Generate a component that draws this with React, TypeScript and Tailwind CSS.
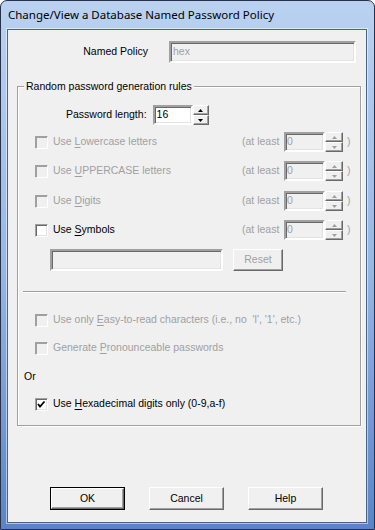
import React from "react";

// classic win32 dialog bits
const sunken =
  "border-2 border-t-[#a0a0a0] border-l-[#a0a0a0] border-b-white border-r-white shadow-[inset_1px_1px_0_#696969,inset_-1px_-1px_0_#e3e3e3]";
const raised =
  "border border-t-white border-l-white border-b-[#696969] border-r-[#696969] shadow-[inset_-1px_-1px_0_#a0a0a0]";

function Label({
  pre,
  hot,
  post,
}: {
  pre: string;
  hot: string;
  post: string;
}) {
  return (
    <span className="whitespace-pre">
      {pre}
      <span className="underline underline-offset-2">{hot}</span>
      {post}
    </span>
  );
}

function Field({
  value,
  enabled,
  className,
}: {
  value: string;
  enabled?: boolean;
  className: string;
}) {
  return (
    <div
      className={`${sunken} ${className} flex items-center pl-[1px] ${
        enabled ? "bg-white text-black" : "bg-[#f0f0f0] text-[#a0a0a0]"
      }`}
    >
      {value}
    </div>
  );
}

function Arrow({ up, enabled }: { up?: boolean; enabled?: boolean }) {
  return (
    <svg width="5" height="3" viewBox="0 0 5 3" className="block">
      <polygon
        points={up ? "0,3 5,3 2.5,0" : "0,0 5,0 2.5,3"}
        fill={enabled ? "#000" : "#a0a0a0"}
      />
    </svg>
  );
}

function Spinner({ enabled, className }: { enabled?: boolean; className: string }) {
  return (
    <div className={`flex flex-col ${className}`}>
      <div className={`${raised} flex-1 bg-[#f0f0f0] flex items-center justify-center`}>
        <Arrow up enabled={enabled} />
      </div>
      <div className={`${raised} flex-1 bg-[#f0f0f0] flex items-center justify-center`}>
        <Arrow enabled={enabled} />
      </div>
    </div>
  );
}

function Check({ enabled, checked }: { enabled?: boolean; checked?: boolean }) {
  return (
    <div
      className={`w-[13px] h-[13px] shrink-0 border border-t-[#a0a0a0] border-l-[#a0a0a0] border-b-white border-r-white ${
        enabled
          ? "bg-white shadow-[inset_1px_1px_0_#696969,inset_-1px_-1px_0_#e3e3e3]"
          : "bg-[#f0f0f0] shadow-[inset_1px_1px_0_#a0a0a0]"
      }`}
    >
      {checked && (
        <svg width="11" height="11" viewBox="0 0 11 11" className="block">
          <polyline
            points="2,5 4,7.5 8.5,2.5"
            fill="none"
            stroke="#000"
            strokeWidth="1.8"
          />
        </svg>
      )}
    </div>
  );
}

type Opt = {
  pre: string;
  hot: string;
  post: string;
  enabled?: boolean;
  checked?: boolean;
  atLeast?: boolean;
  mt: string;
};

function CheckRow({ o }: { o: Opt }) {
  return (
    <div className={`flex items-center h-[20px] pl-[17px] ${o.mt}`}>
      <Check enabled={o.enabled} checked={o.checked} />
      <div
        className={`ml-[5px] w-[189px] ${
          o.enabled ? "text-black" : "text-[#a0a0a0]"
        }`}
      >
        <Label pre={o.pre} hot={o.hot} post={o.post} />
      </div>
      {o.atLeast && (
        <>
          <span className="w-[42px] text-[#a0a0a0]">(at least</span>
          <Field value="0" className="w-[41px] h-[20px]" />
          <Spinner className="w-[18px] h-[20px]" />
          <span className="ml-[4px] text-[#a0a0a0]">)</span>
        </>
      )}
    </div>
  );
}

const charRules: Opt[] = [
  { pre: "Use ", hot: "L", post: "owercase letters", atLeast: true, mt: "mt-[7px]" },
  { pre: "Use ", hot: "U", post: "PPERCASE letters", atLeast: true, mt: "mt-[9px]" },
  { pre: "Use ", hot: "D", post: "igits", atLeast: true, mt: "mt-[10px]" },
  { pre: "Use ", hot: "S", post: "ymbols", atLeast: true, enabled: true, mt: "mt-[9px]" },
];

function Btn({ label, isDefault, disabled }: { label: string; isDefault?: boolean; disabled?: boolean }) {
  return (
    <div
      className={`h-[23px] w-[75px] ${
        isDefault ? "border border-black" : ""
      } bg-[#f0f0f0]`}
    >
      <div
        className={`h-full w-full ${raised} flex items-center justify-center ${
          disabled ? "text-[#a0a0a0]" : "text-black"
        }`}
      >
        {label}
      </div>
    </div>
  );
}

export default function App() {
  return (
    <div className="w-[375px] h-[530px] flex flex-col rounded-t-[7px] border border-[#26324a] bg-gradient-to-b from-[#bad2f0] via-[#96b8e6] to-[#5a84c6] font-['Liberation_Sans',Arial,sans-serif] text-[10.5px]">
      <div className="h-[28px] pl-[7px] flex items-center font-['Noto_Sans',sans-serif] text-[11.5px] text-black">
        Change/View a Database Named Password Policy
      </div>
      <div className="flex-1 ml-[6px] mr-[7px] mb-[6px] border border-[#4e6284] shadow-[0_0_0_1px_rgba(255,255,255,0.5)] bg-[#f0f0f0] flex flex-col">
        {/* named policy */}
        <div className="flex items-center mt-[11px]">
          <div className="w-[140px] text-right text-black">Named Policy</div>
          <Field value="hex" className="ml-[21px] w-[187px] h-[22px] pl-[2px]" />
        </div>

        {/* group box */}
        <div className="relative ml-[9px] mt-[23px] w-[344px] border border-[#a0a0a0] shadow-[inset_1px_1px_0_#fff,1px_1px_0_#fff] pt-[18px] pb-[11px]">
          <span className="absolute left-[6px] -top-[8px] px-[2px] bg-[#f0f0f0] text-black">
            Random password generation rules
          </span>

          <div className="flex items-center h-[20px] pl-[48px]">
            <span className="text-black">Password length:</span>
            <Field value="16" enabled className="ml-[6px] w-[40px] h-[20px] pl-[2px]" />
            <Spinner enabled className="w-[16px] h-[20px]" />
          </div>

          {charRules.map((o) => (
            <CheckRow key={o.hot} o={o} />
          ))}

          <div className="flex items-center pl-[32px] mt-[9px]">
            <Field value="" className="w-[173px] h-[22px]" />
            <div className="ml-[10px]">
              <div className={`h-[22px] w-[50px] ${raised} bg-[#f0f0f0] flex items-center justify-center text-[#a0a0a0]`}>
                Reset
              </div>
            </div>
          </div>

          <div className="ml-[5px] mt-[20px] w-[323px] border-t border-t-[#a0a0a0] border-b border-b-white" />

          <CheckRow
            o={{ pre: "Use only ", hot: "E", post: "asy-to-read characters (i.e., no  'l', '1', etc.)", mt: "mt-[17px]" }}
          />
          <CheckRow
            o={{ pre: "Generate ", hot: "P", post: "ronounceable passwords", mt: "mt-[8px]" }}
          />
          <div className="h-[20px] mt-[9px] pl-[6px] flex items-center text-black">Or</div>
          <div className="flex items-center h-[20px] pl-[17px] mt-[7px]">
            <Check enabled checked />
            <div className="ml-[5px] text-black">
              <Label pre="Use " hot="H" post="exadecimal digits only (0-9,a-f)" />
            </div>
          </div>
        </div>

        {/* buttons */}
        <div className="flex ml-[42px] mt-[61px] gap-[24px]">
          <Btn label="OK" isDefault />
          <Btn label="Cancel" />
          <Btn label="Help" />
        </div>
      </div>
    </div>
  );
}
